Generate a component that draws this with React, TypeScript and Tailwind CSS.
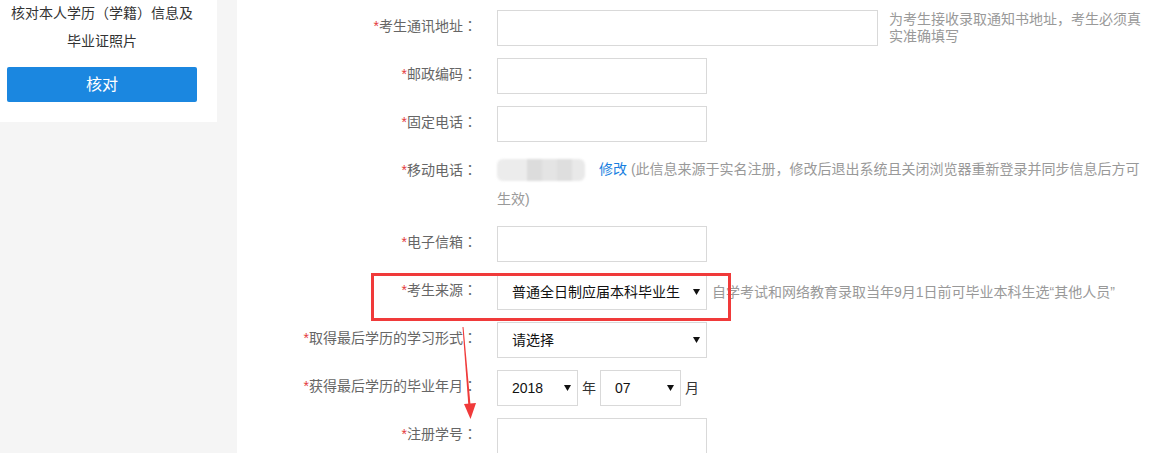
import React from "react";

const font = "font-[family-name:'Liberation_Sans','Noto_Sans_CJK_SC',sans-serif]";

const Label = ({ text }: { text: string }) => (
  <div className="w-[240px] shrink-0 text-right text-[14px] leading-[30px] text-[#666]">
    <span className="text-[#e4393c]">*</span>
    {text}
    <span className="font-[family-name:'Noto_Sans_CJK_TC',sans-serif]">：</span>
  </div>
);

const Caret = () => (
  <svg width="7" height="6" viewBox="0 0 7 6" className="shrink-0">
    <polygon points="0,0 7,0 3.5,6" fill="#111" />
  </svg>
);

const SelectBox = ({ value, width }: { value: string; width: string }) => (
  <div
    className={`flex h-[36px] items-center justify-between border border-[#d9d9d9] bg-white pl-[14px] pr-[6px] text-[14px] text-[#111] ${width}`}
  >
    <span>{value}</span>
    <Caret />
  </div>
);

const InputBox = ({ width }: { width: string }) => (
  <div className={`h-[36px] border border-[#d9d9d9] bg-white ${width}`} />
);

export default function App() {
  return (
    <div className={`relative flex h-[453px] w-[1151px] overflow-hidden bg-[#f5f5f5] ${font}`}>
      {/* sidebar card */}
      <div className="w-[217px] shrink-0">
        <div className="-mt-px bg-white pb-[20px]">
          <div className="ml-[7px] w-[190px]">
            <p className="text-center text-[14px] leading-[28px] text-[#333]">
              核对本人学历（学籍）信息及毕业证照片
            </p>
            <button className="mt-[12px] flex h-[35px] w-[190px] items-center justify-center rounded-[2px] bg-[#1b87e0] text-[16px] text-white">
              核对
            </button>
          </div>
        </div>
      </div>

      {/* main form */}
      <div className="ml-[20px] flex-1 bg-white pt-[10px]">
        <div className="flex flex-col gap-[12px]">
          <div className="flex">
            <Label text="考生通讯地址" />
            <div className="ml-[20px]">
              <InputBox width="w-[381px]" />
            </div>
            <p className="ml-[11px] mt-px w-[260px] text-[14px] leading-[17px] text-[#999]">
              为考生接收录取通知书地址，考生必须真实准确填写
            </p>
          </div>

          <div className="flex">
            <Label text="邮政编码" />
            <div className="ml-[20px]">
              <InputBox width="w-[210px]" />
            </div>
          </div>

          <div className="flex">
            <Label text="固定电话" />
            <div className="ml-[20px]">
              <InputBox width="w-[210px]" />
            </div>
          </div>

          <div className="flex h-[60px]">
            <Label text="移动电话" />
            <p className="ml-[20px] w-[650px] text-[14px] leading-[30px] text-[#999]">
              <span className="inline-flex h-[22px] w-[88px] overflow-hidden rounded-[6px] align-middle blur-[1px]">
                <span className="w-[30px] bg-[#ececec]" />
                <span className="w-[15px] bg-[#dcdcdc]" />
                <span className="w-[15px] bg-[#e4e4e4]" />
                <span className="w-[15px] bg-[#dedede]" />
                <span className="w-[13px] bg-[#e9e9e9]" />
              </span>
              <a className="ml-[14px] text-[#1a7fe0]">修改</a> (此信息来源于实名注册，修改后退出系统且关闭浏览器重新登录并同步信息后方可生效)
            </p>
          </div>

          <div className="flex">
            <Label text="电子信箱" />
            <div className="ml-[20px]">
              <InputBox width="w-[210px]" />
            </div>
          </div>

          <div className="flex">
            <Label text="考生来源" />
            <div className="ml-[20px]">
              <SelectBox value="普通全日制应届本科毕业生" width="w-[210px]" />
            </div>
            <p className="ml-[5px] text-[14px] leading-[36px] text-[#999]">
              自学考试和网络教育录取当年9月1日前可毕业本科生选“其他人员”
            </p>
          </div>

          <div className="flex">
            <Label text="取得最后学历的学习形式" />
            <div className="ml-[20px]">
              <SelectBox value="请选择" width="w-[210px]" />
            </div>
          </div>

          <div className="flex">
            <Label text="获得最后学历的毕业年月" />
            <div className="ml-[20px] flex items-center text-[14px] text-[#333]">
              <SelectBox value="2018" width="w-[81px]" />
              <span className="mx-[4px]">年</span>
              <SelectBox value="07" width="w-[81px]" />
              <span className="ml-[4px]">月</span>
            </div>
          </div>

          <div className="flex">
            <Label text="注册学号" />
            <div className="ml-[20px]">
              <InputBox width="w-[210px]" />
            </div>
          </div>
        </div>
      </div>

      {/* annotation: red box and arrow */}
      <div className="pointer-events-none absolute left-[371px] top-[273px] h-[48px] w-[360px] border-[3px] border-[#f03a3a]" />
      <svg
        className="pointer-events-none absolute left-0 top-0"
        width="1151"
        height="453"
        viewBox="0 0 1151 453"
      >
        <polygon points="462.5,327 463.5,327 470.6,406 468.4,406" fill="#f03a3a" />
        <polygon points="464,404 476,403 470.5,419" fill="#f03a3a" />
      </svg>
    </div>
  );
}
